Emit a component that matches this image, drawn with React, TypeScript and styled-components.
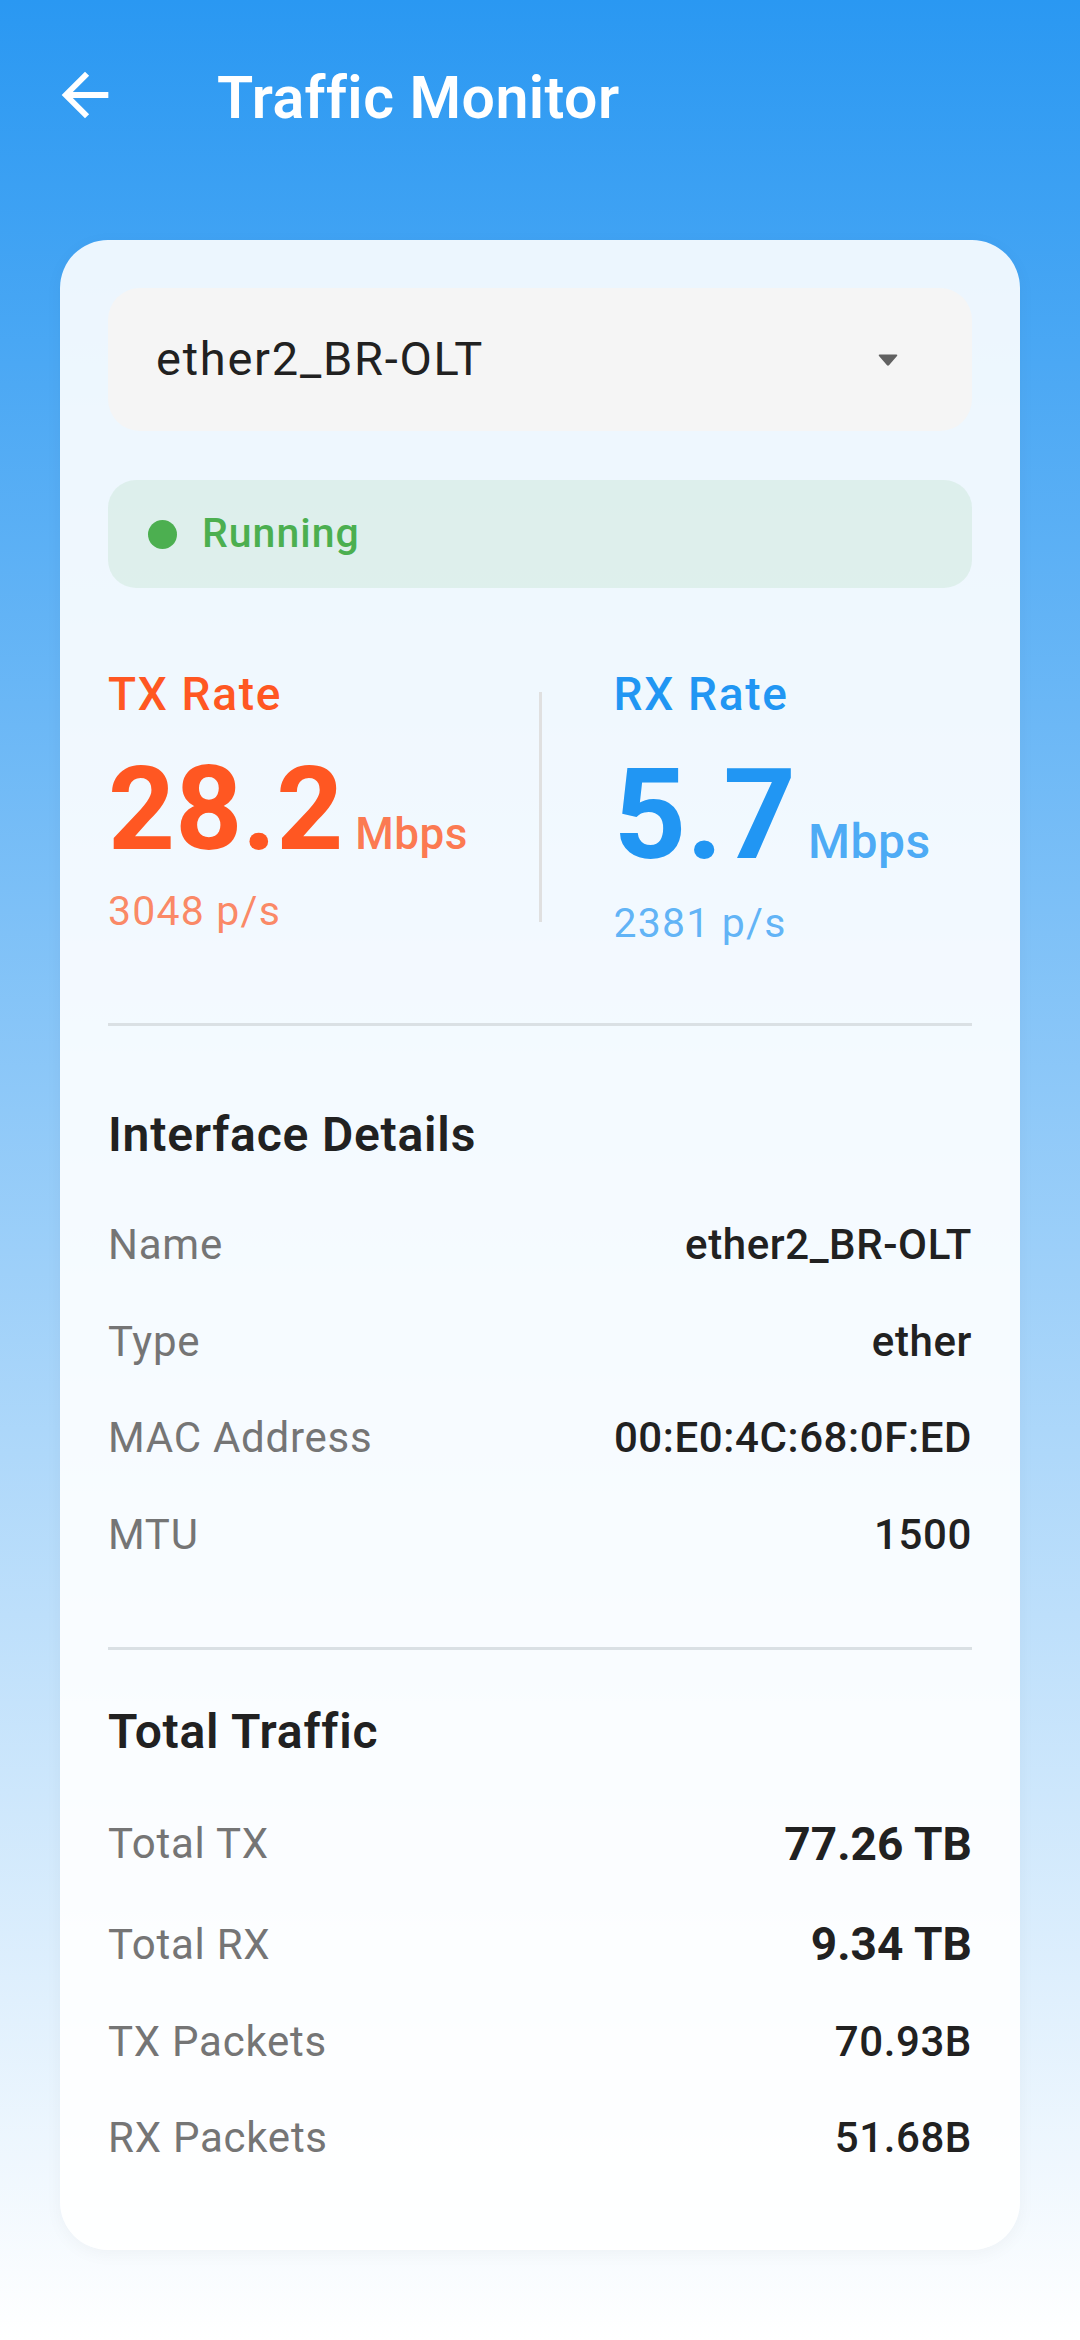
import React from "react";
import styled, { createGlobalStyle } from "styled-components";

const GlobalStyle = createGlobalStyle`
  html, body {
    margin: 0;
    padding: 0;
  }
  body {
    font-family: Roboto, "Noto Sans", "Liberation Sans", sans-serif;
    -webkit-font-smoothing: antialiased;
  }
  * { box-sizing: border-box; }
`;

const Page = styled.div`
  min-height: 2340px;
  width: 1080px;
  background: linear-gradient(180deg, #2a98f2 0%, #ffffff 100%);
  display: flex;
  flex-direction: column;
`;

const Header = styled.header`
  height: 194px;
  display: flex;
  align-items: center;
  padding-left: 50px;
`;

const BackButton = styled.button`
  width: 70px;
  height: 70px;
  padding: 0;
  border: none;
  background: transparent;
  color: #ffffff;
  display: flex;
  align-items: center;
  justify-content: center;
  margin-bottom: 4px;
  cursor: pointer;
`;

const Title = styled.h1`
  margin: 3px 0 0 97px;
  font-size: 59px;
  line-height: 1.2;
  font-weight: 600;
  color: #ffffff;
  letter-spacing: 0.45px;
`;

const Card = styled.main`
  margin: 46px 60px 0;
  padding: 48px 48px 64px;
  border-radius: 48px;
  background: rgba(255, 255, 255, 0.9);
  box-shadow: 0 4px 18px rgba(0, 0, 0, 0.04);
  display: flex;
  flex-direction: column;
`;

const Dropdown = styled.div`
  height: 143px;
  border-radius: 32px;
  background: #f5f5f5;
  display: flex;
  align-items: center;
  justify-content: space-between;
  padding: 0 73px 0 48px;
`;

const DropdownText = styled.span`
  font-size: 47px;
  line-height: 1.2;
  font-weight: 400;
  letter-spacing: 1.75px;
  color: #212121;
`;

const StatusBadge = styled.div`
  margin-top: 49px;
  height: 108px;
  border-radius: 28px;
  background: rgba(76, 175, 80, 0.1);
  display: flex;
  align-items: center;
  gap: 25px;
  padding: 0 40px;
`;

const StatusDot = styled.span`
  width: 29px;
  height: 29px;
  border-radius: 50%;
  background: #4caf50;
`;

const StatusText = styled.span`
  font-size: 41px;
  line-height: 1.2;
  font-weight: 500;
  letter-spacing: 1px;
  color: #4caf50;
`;

const StatsGrid = styled.section`
  margin-top: 79px;
  display: grid;
  grid-template-columns: 1fr 3px 1fr;
  align-items: start;
`;

const StatColumn = styled.div<{ $inset?: number }>`
  display: flex;
  flex-direction: column;
  padding-left: ${(p) => p.$inset ?? 0}px;
`;

const VDivider = styled.div`
  align-self: center;
  width: 3px;
  height: 230px;
  background: #e0e0e0;
`;

const StatLabel = styled.span<{ $color: string }>`
  font-size: 46px;
  line-height: 1.2;
  font-weight: 500;
  letter-spacing: 1.7px;
  color: ${(p) => p.$color};
`;

const StatValueRow = styled.div`
  display: flex;
  align-items: baseline;
  margin-top: 17px;
`;

const StatNumber = styled.span<{ $color: string; $size: number }>`
  font-size: ${(p) => p.$size}px;
  line-height: 1.2;
  font-weight: 700;
  color: ${(p) => p.$color};
`;

const StatUnit = styled.span<{ $color: string; $size: number }>`
  margin-left: 12px;
  font-size: ${(p) => p.$size}px;
  line-height: 1.2;
  font-weight: 500;
  letter-spacing: 0.5px;
  color: ${(p) => p.$color};
`;

const StatPackets = styled.span<{ $color: string }>`
  margin-top: 7px;
  font-size: 41px;
  line-height: 1.2;
  font-weight: 400;
  letter-spacing: 1.2px;
  color: ${(p) => p.$color};
`;

const HDivider = styled.hr<{ $before: number; $after: number }>`
  margin: ${(p) => p.$before}px 0 ${(p) => p.$after}px;
  height: 3px;
  border: none;
  background: #dae0e4;
`;

const SectionTitle = styled.h2`
  margin: 0 0 34px;
  font-size: 48px;
  line-height: 1.2;
  font-weight: 600;
  letter-spacing: 0.8px;
  color: #212121;
`;

const InfoList = styled.div`
  display: flex;
  flex-direction: column;
`;

const InfoRow = styled.div<{ $pad: number }>`
  display: flex;
  align-items: center;
  justify-content: space-between;
  padding: ${(p) => p.$pad}px 0;
`;

const InfoLabel = styled.span`
  font-size: 42px;
  line-height: 1.2;
  font-weight: 400;
  letter-spacing: 0.75px;
  color: #757575;
`;

const InfoValue = styled.span<{ $strong?: boolean }>`
  font-size: ${(p) => (p.$strong ? 46 : 42)}px;
  line-height: 1.2;
  font-weight: ${(p) => (p.$strong ? 700 : 500)};
  letter-spacing: ${(p) => (p.$strong ? 0.1 : 0.6)}px;
  color: #212121;
`;

const ArrowBackIcon = () => (
  <svg width="70" height="70" viewBox="0 0 24 24" fill="currentColor" aria-hidden="true">
    <path d="M20 11H7.83l5.59-5.59L12 4l-8 8 8 8 1.41-1.41L7.83 13H20v-2z" />
  </svg>
);

const DropArrow = () => (
  <svg width="22" height="14" viewBox="0 0 22 14" aria-hidden="true">
    <path
      d="M2.5 1.5 H19.5 Q21 1.5 20 3 L12.2 12 Q11 13.4 9.8 12 L2 3 Q1 1.5 2.5 1.5 Z"
      fill="#616161"
    />
  </svg>
);

type Row = { label: string; value: string; strong?: boolean };

const details: Row[] = [
  { label: "Name", value: "ether2_BR-OLT" },
  { label: "Type", value: "ether" },
  { label: "MAC Address", value: "00:E0:4C:68:0F:ED" },
  { label: "MTU", value: "1500" },
];

const totals: Row[] = [
  { label: "Total TX", value: "77.26 TB", strong: true },
  { label: "Total RX", value: "9.34 TB", strong: true },
  { label: "TX Packets", value: "70.93B" },
  { label: "RX Packets", value: "51.68B" },
];

const TX = "#FF5722";
const RX = "#2196F3";

function InfoSection({ title, rows, pad }: { title: string; rows: Row[]; pad: number }) {
  return (
    <>
      <SectionTitle>{title}</SectionTitle>
      <InfoList>
        {rows.map((r) => (
          <InfoRow key={r.label} $pad={pad}>
            <InfoLabel>{r.label}</InfoLabel>
            <InfoValue $strong={r.strong}>{r.value}</InfoValue>
          </InfoRow>
        ))}
      </InfoList>
    </>
  );
}

export default function App() {
  return (
    <>
      <GlobalStyle />
      <Page>
        <Header>
          <BackButton aria-label="Back">
            <ArrowBackIcon />
          </BackButton>
          <Title>Traffic Monitor</Title>
        </Header>

        <Card>
          <Dropdown>
            <DropdownText>ether2_BR-OLT</DropdownText>
            <DropArrow />
          </Dropdown>

          <StatusBadge>
            <StatusDot />
            <StatusText>Running</StatusText>
          </StatusBadge>

          <StatsGrid>
            <StatColumn>
              <StatLabel $color={TX}>TX Rate</StatLabel>
              <StatValueRow>
                <StatNumber $color={TX} $size={117}>28.2</StatNumber>
                <StatUnit $color="rgba(255,87,34,0.8)" $size={44}>Mbps</StatUnit>
              </StatValueRow>
              <StatPackets $color="rgba(255,87,34,0.7)">3048 p/s</StatPackets>
            </StatColumn>
            <VDivider />
            <StatColumn $inset={72}>
              <StatLabel $color={RX}>RX Rate</StatLabel>
              <StatValueRow>
                <StatNumber $color={RX} $size={127}>5.7</StatNumber>
                <StatUnit $color="rgba(33,150,243,0.8)" $size={48}>Mbps</StatUnit>
              </StatValueRow>
              <StatPackets $color="rgba(33,150,243,0.7)">2381 p/s</StatPackets>
            </StatColumn>
          </StatsGrid>

          <HDivider $before={75} $after={80} />

          <InfoSection title="Interface Details" rows={details} pad={23} />

          <HDivider $before={64} $after={53} />

          <InfoSection title="Total Traffic" rows={totals} pad={22.5} />
        </Card>
      </Page>
    </>
  );
}
